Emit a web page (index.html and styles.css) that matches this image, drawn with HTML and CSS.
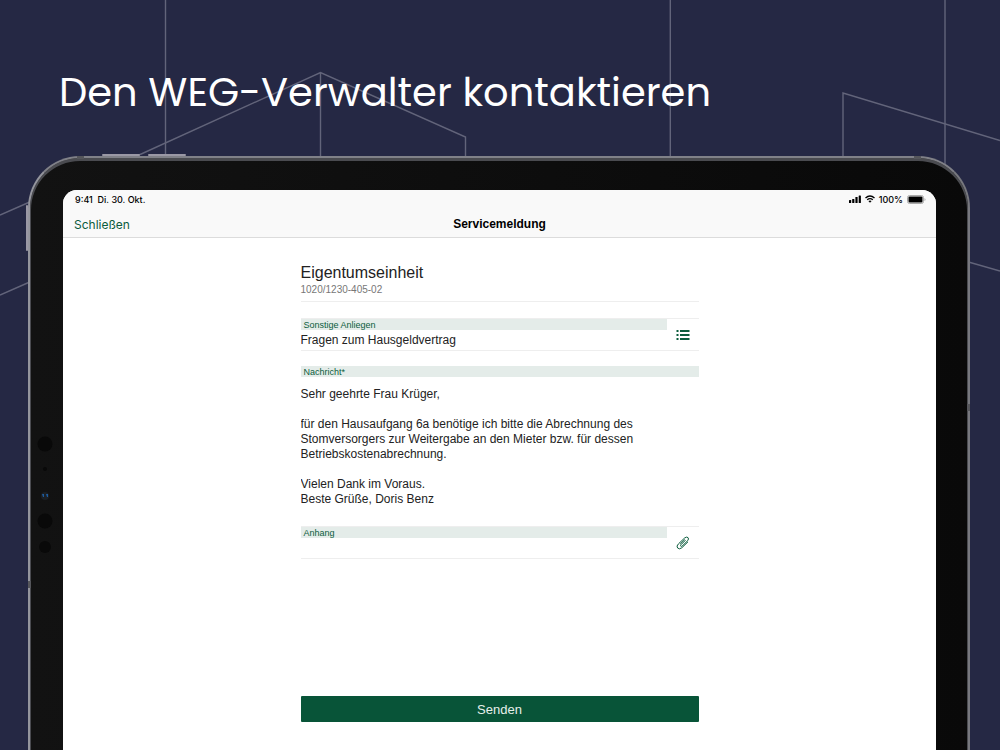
FILE: index.html
```html
<!DOCTYPE html>
<html lang="de">
<head>
  <meta charset="UTF-8">
  <meta name="viewport" content="width=device-width, initial-scale=1.0">
  <title>Den WEG-Verwalter kontaktieren</title>
  <link rel="stylesheet" href="styles.css">
</head>
<body>
  <svg class="bg-lines" viewBox="0 0 1000 750" preserveAspectRatio="xMidYMin slice" aria-hidden="true">
    <path d="M165.500 0V160M670.300 0V160M945 0V170"/>
    <path d="M128 160L320.500 72.500L465.500 137V160M320.500 72.500V160"/>
    <path d="M843 160V93L1000 140.500"/>
    <path d="M0 215L32 201M0 295L32 281M965 261L1000 271"/>
  </svg>

  <h1>Den WEG-Verwalter kontaktieren</h1>

  <div class="tablet">
    <span class="key key-up"></span>
    <span class="key key-down"></span>
    <span class="key key-power"></span>
    <span class="band band-top-left"></span>
    <span class="band band-top-right"></span>
    <span class="band band-left"></span>
    <span class="band band-right"></span>
    <svg class="sensors" width="20" height="120" viewBox="0 0 20 120" aria-hidden="true">
      <circle cx="10" cy="10" r="7.500"/>
      <circle cx="10" cy="35" r="2"/>
      <circle cx="10" cy="62" r="4" fill="#1b1f24"/>
      <path d="M7 60h2v3h-1zM11 60h2v3h-1z" fill="#1d5a9c"/>
      <circle cx="10" cy="87" r="7.500"/>
      <circle cx="10" cy="113" r="6"/>
    </svg>

    <div class="screen">
      <header>
        <div class="status">
          <span>9:41&nbsp; Di. 30. Okt.</span>
          <span class="status-right">
            <svg width="12" height="8" viewBox="0 0 12 8">
              <rect x="0" y="5" width="2.200" height="3" rx=".5"/>
              <rect x="3.200" y="4" width="2.200" height="4" rx=".5"/>
              <rect x="6.400" y="2" width="2.200" height="6" rx=".5"/>
              <rect x="9.700" y="0.500" width="2.200" height="7.500" rx=".5"/>
            </svg>
            <svg width="10" height="8" viewBox="0 0 10 8">
              <path d="M.5 3Q5-1 9.500 3M2.200 4.800Q5 2.500 7.800 4.800" fill="none" stroke="#000" stroke-width="1.400"/>
              <path d="M3.400 6Q5 4.800 6.600 6L5 7.700z"/>
            </svg>
            <span>100%</span>
            <svg width="19" height="9" viewBox="0 0 19 9">
              <rect x=".5" y=".5" width="16" height="8" rx="2" fill="none" stroke="#aaa"/>
              <rect x="1.500" y="1.500" width="14" height="6" rx="1"/>
              <path d="M17.500 3v3q1-.5 1-1.500t-1-1.500" fill="#aaa"/>
            </svg>
          </span>
        </div>
        <nav>
          <a href="#">Schließen</a>
          <h2>Servicemeldung</h2>
        </nav>
      </header>

      <form>
        <div class="unit">
          <h3>Eigentumseinheit</h3>
          <p>1020/1230-405-02</p>
        </div>

        <div class="field">
          <label for="subject">Sonstige Anliegen</label>
          <input type="text" id="subject" value="Fragen zum Hausgeldvertrag">
          <button type="button" class="icon-btn" aria-label="Anliegen auswählen">
            <svg width="14" height="12" viewBox="0 0 14 12">
              <path d="M0.500 2h2M4 2h9.500M0.500 6h2M4 6h9.500M0.500 10h2M4 10h9.500" stroke-width="1.800"/>
            </svg>
          </button>
        </div>

        <div class="message">
          <label for="message">Nachricht*</label>
          <textarea id="message" rows="8">Sehr geehrte Frau Krüger,

für den Hausaufgang 6a benötige ich bitte die Abrechnung des Stomversorgers zur Weitergabe an den Mieter bzw. für dessen Betriebskostenabrechnung.

Vielen Dank im Voraus.
Beste Grüße, Doris Benz</textarea>
        </div>

        <div class="field">
          <label for="attachment">Anhang</label>
          <input type="text" id="attachment">
          <button type="button" class="icon-btn" aria-label="Datei anhängen">
            <svg width="14" height="14" viewBox="0 0 14 14">
              <path d="M9.500 4.200L5 8.700q-.9 1-.2 1.500t1.500-.2L11.500 4.800Q13.300 2.800 12 1.600T8.600 2L2.500 7.800Q0 10.200 1.600 12t4.200-.2L12 5.800M8.800 3.500L4.200 8" stroke-width="1"/>
            </svg>
          </button>
        </div>

        <button type="submit" class="send">Senden</button>
      </form>
    </div>
  </div>
</body>
</html>
```
FILE: styles.css
```css
* {
  box-sizing: border-box;
}
body {
  margin: 0;
  height: 100vh;
  display: flex;
  flex-direction: column;
  overflow: hidden;
  background: #252844;
  font-family: "Liberation Sans", Arial, sans-serif;
  color: #222;
}
h1, h2, h3, p {
  margin: 0;
  font-weight: 400;
}
.bg-lines {
  position: absolute;
  top: 0;
  left: 0;
  width: 100%;
  height: 100%;
  z-index: -1;
  fill: none;
  stroke: #62647a;
  stroke-width: 1.4;
}
h1 {
  padding: 62px 59px 34px;
  font-family: Poppins, Lato, sans-serif;
  font-size: 40px;
  line-height: 60px;
  color: #fff;
  white-space: nowrap;
}

/* tablet frame */
.tablet {
  position: relative;
  flex: 1;
  display: flex;
  margin: 0 30px 0 28px;
  padding: 32px 32px 0 33px;
  border: 2px solid #808188;
  border-bottom: none;
  border-left-color: #94959d;
  border-right-color: #77787e;
  border-radius: 52px 52px 0 0;
  background: linear-gradient(to right, #121212, #090909);
  box-shadow: inset 0 2px 0 1px #4a4b50;
}
.key {
  position: absolute;
  background: #9a98a5;
  border-radius: 2px;
}
.key-up, .key-down {
  top: -4px;
  width: 38px;
  height: 2px;
}
.key-up {
  left: 72px;
}
.key-down {
  left: 118px;
}
.key-power {
  top: 47px;
  left: -4px;
  width: 2px;
  height: 46px;
}
.band {
  position: absolute;
  background: #55565b;
}
.band-top-left, .band-top-right {
  top: -2px;
  width: 7px;
  height: 3px;
}
.band-top-left {
  left: 47px;
}
.band-top-right {
  right: 47px;
}
.band-left, .band-right {
  width: 3px;
  height: 7px;
}
.band-left {
  top: 423px;
  left: -2px;
}
.band-right {
  top: 246px;
  right: -2px;
}
.sensors {
  position: absolute;
  top: 276px;
  left: 5px;
  fill: #090909;
}
.screen {
  flex: 1;
  display: flex;
  flex-direction: column;
  overflow: hidden;
  background: #fff;
  border-radius: 14px 14px 0 0;
}

/* top bars */
header {
  background: #f9f9f9;
  border-bottom: 1px solid #dcdcdc;
  font-family: Inter, sans-serif;
  color: #000;
}
.status {
  display: flex;
  justify-content: space-between;
  align-items: center;
  height: 18px;
  padding: 0 10px 0 12px;
  font-size: 9px;
  font-weight: 500;
}
.status-right {
  display: flex;
  align-items: center;
  gap: 4px;
}
nav {
  display: grid;
  grid-template-columns: 1fr auto 1fr;
  align-items: center;
  height: 29px;
  padding: 3px 11px 0;
  font-size: 12px;
}
nav a {
  color: #0b5c3d;
  text-decoration: none;
}
nav h2 {
  font-family: "Liberation Sans", Arial, sans-serif;
  font-size: 12px;
  font-weight: 700;
}

/* form */
form {
  flex: 1;
  display: flex;
  flex-direction: column;
  width: 100%;
  max-width: 398px;
  margin: 0 auto;
  padding: 25px 0 28px;
}
.unit {
  padding-bottom: 4px;
  margin-bottom: 16px;
  border-bottom: 1px solid #eee;
}
.unit h3 {
  font-size: 16px;
  line-height: 20px;
}
.unit p {
  font-size: 10px;
  line-height: 14px;
  color: #777;
}
label {
  display: block;
  height: 11px;
  padding-left: 3px;
  background: #e4ece9;
  color: #0b5c3d;
  font-size: 9px;
  line-height: 12px;
}
input, textarea {
  display: block;
  width: 100%;
  padding: 0;
  border: none;
  outline: none;
  background: none;
  color: #222;
  font-family: inherit;
  font-size: 12px;
}
.field {
  display: grid;
  grid-template-columns: 1fr 32px;
  border-top: 1px solid #eee;
  border-bottom: 1px solid #eee;
}
.field input {
  height: 20px;
}
.icon-btn {
  grid-column: 2;
  grid-row: 1 / 3;
  display: flex;
  align-items: center;
  justify-content: center;
  padding: 0;
  border: none;
  background: none;
  cursor: pointer;
}
.icon-btn svg {
  fill: none;
  stroke: #0b5c3d;
}
.message {
  margin: 15px 0 19px;
}
textarea {
  padding-top: 10px;
  line-height: 15px;
  resize: none;
  overflow: hidden;
}
.send {
  height: 26px;
  margin-top: auto;
  border: none;
  border-radius: 1px;
  background: #085438;
  color: #e6efeb;
  font-family: inherit;
  font-size: 13px;
  cursor: pointer;
}
```
